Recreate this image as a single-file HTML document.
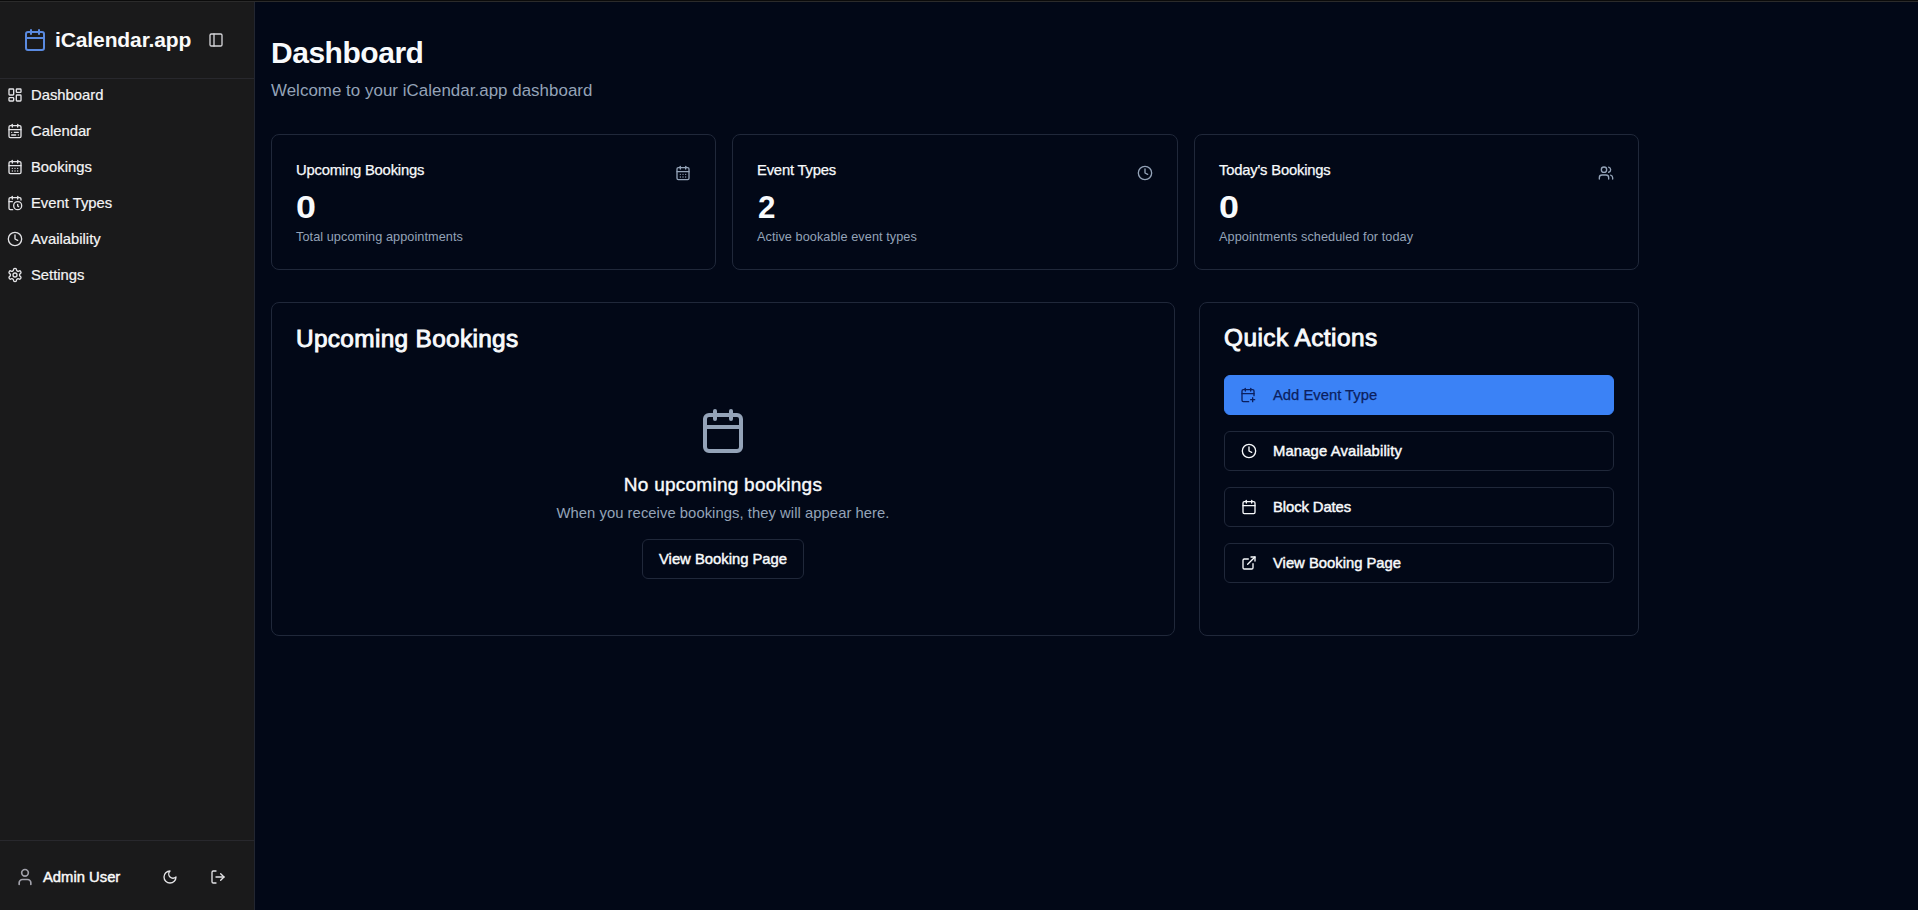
<!DOCTYPE html>
<html><head><meta charset="utf-8">
<style>
*{box-sizing:border-box;margin:0;padding:0}
html,body{width:1918px;height:910px;overflow:hidden;background:#020817;font-family:"Liberation Sans",sans-serif;color:#f8fafc}
svg.i{position:absolute;fill:none;stroke:currentColor;stroke-width:2;stroke-linecap:round;stroke-linejoin:round}
#topline{position:absolute;left:0;top:0;width:1918px;height:2px;background:#0b0b0b;border-bottom:1px solid #2b2b2b;z-index:5}
#side{position:absolute;left:0;top:0;width:255px;height:910px;background:#1a1a1b;border-right:1px solid #222631}
.hdr{position:absolute;left:0;top:0;width:254px;height:79px;border-bottom:1px solid #28282d}
.ftr{position:absolute;left:0;top:840px;width:254px;height:70px;border-top:1px solid #28282d}
.t{position:absolute;white-space:nowrap;line-height:1}
.card{position:absolute;border:1px solid #20283a;border-radius:8px;background:#020817}
.btn{position:absolute;border:1px solid #20283a;border-radius:6px;background:#020817}
</style></head><body>
<div id="topline"></div>
<div id="side">
<div class="hdr"></div>
<svg class="i" style="left:23px;top:28px;color:#5a8ae0" width="24" height="24" viewBox="0 0 24 24"><path d="M8 2v4"/><path d="M16 2v4"/><rect width="18" height="18" x="3" y="4" rx="2"/><path d="M3 10h18"/></svg>
<div class="t" style="left:55px;top:29.42px;font-size:21px;color:#fafafa;font-weight:bold;letter-spacing:-0.11px;">iCalendar.app</div>
<svg class="i" style="left:208px;top:32px;color:#d4d4d8" width="16" height="16" viewBox="0 0 24 24"><rect width="18" height="18" x="3" y="3" rx="2"/><path d="M9 3v18"/></svg>
<svg class="i" style="left:7px;top:87px;color:#e4e4e7" width="16" height="16" viewBox="0 0 24 24"><rect width="7" height="9" x="3" y="3" rx="1"/><rect width="7" height="5" x="14" y="3" rx="1"/><rect width="7" height="9" x="14" y="12" rx="1"/><rect width="7" height="5" x="3" y="16" rx="1"/></svg>
<div class="t" style="left:31px;top:88.17px;font-size:14.8px;color:#f4f4f5;-webkit-text-stroke:0.2px currentColor;">Dashboard</div>
<svg class="i" style="left:7px;top:123px;color:#e4e4e7" width="16" height="16" viewBox="0 0 24 24"><rect width="18" height="18" x="3" y="4" rx="2"/><path d="M16 2v4"/><path d="M3 10h18"/><path d="M8 2v4"/><path d="M17 14h-6"/><path d="M13 18H7"/><path d="M7 14h.01"/><path d="M17 18h.01"/></svg>
<div class="t" style="left:31px;top:124.17px;font-size:14.8px;color:#f4f4f5;-webkit-text-stroke:0.2px currentColor;">Calendar</div>
<svg class="i" style="left:7px;top:159px;color:#e4e4e7" width="16" height="16" viewBox="0 0 24 24"><path d="M8 2v4"/><path d="M16 2v4"/><rect width="18" height="18" x="3" y="4" rx="2"/><path d="M3 10h18"/><path d="M8 14h.01"/><path d="M12 14h.01"/><path d="M16 14h.01"/><path d="M8 18h.01"/><path d="M12 18h.01"/><path d="M16 18h.01"/></svg>
<div class="t" style="left:31px;top:160.17px;font-size:14.8px;color:#f4f4f5;-webkit-text-stroke:0.2px currentColor;">Bookings</div>
<svg class="i" style="left:7px;top:195px;color:#e4e4e7" width="16" height="16" viewBox="0 0 24 24"><path d="M21 7.5V6a2 2 0 0 0-2-2H5a2 2 0 0 0-2 2v14a2 2 0 0 0 2 2h3.5"/><path d="M16 2v4"/><path d="M8 2v4"/><path d="M3 10h5"/><path d="M17.5 17.5 16 16.3V14"/><circle cx="16" cy="16" r="6"/></svg>
<div class="t" style="left:31px;top:196.17px;font-size:14.8px;color:#f4f4f5;-webkit-text-stroke:0.2px currentColor;">Event Types</div>
<svg class="i" style="left:7px;top:231px;color:#e4e4e7" width="16" height="16" viewBox="0 0 24 24"><circle cx="12" cy="12" r="10"/><polyline points="12 6 12 12 16 14"/></svg>
<div class="t" style="left:31px;top:232.17px;font-size:14.8px;color:#f4f4f5;-webkit-text-stroke:0.2px currentColor;">Availability</div>
<svg class="i" style="left:7px;top:267px;color:#e4e4e7" width="16" height="16" viewBox="0 0 24 24"><path d="M12.22 2h-.44a2 2 0 0 0-2 2v.18a2 2 0 0 1-1 1.73l-.43.25a2 2 0 0 1-2 0l-.15-.08a2 2 0 0 0-2.73.73l-.22.38a2 2 0 0 0 .73 2.73l.15.1a2 2 0 0 1 1 1.72v.51a2 2 0 0 1-1 1.74l-.15.09a2 2 0 0 0-.73 2.73l.22.38a2 2 0 0 0 2.73.73l.15-.08a2 2 0 0 1 2 0l.43.25a2 2 0 0 1 1 1.73V20a2 2 0 0 0 2 2h.44a2 2 0 0 0 2-2v-.18a2 2 0 0 1 1-1.73l.43-.25a2 2 0 0 1 2 0l.15.08a2 2 0 0 0 2.73-.73l.22-.39a2 2 0 0 0-.73-2.73l-.15-.08a2 2 0 0 1-1-1.74v-.5a2 2 0 0 1 1-1.74l.15-.09a2 2 0 0 0 .73-2.73l-.22-.38a2 2 0 0 0-2.73-.73l-.15.08a2 2 0 0 1-2 0l-.43-.25a2 2 0 0 1-1-1.73V4a2 2 0 0 0-2-2z"/><circle cx="12" cy="12" r="3"/></svg>
<div class="t" style="left:31px;top:268.17px;font-size:14.8px;color:#f4f4f5;-webkit-text-stroke:0.2px currentColor;">Settings</div>
<div class="ftr"></div>
<svg class="i" style="left:15px;top:867px;color:#a1a1aa" width="20" height="20" viewBox="0 0 24 24"><path d="M19 21v-2a4 4 0 0 0-4-4H9a4 4 0 0 0-4 4v2"/><circle cx="12" cy="7" r="4"/></svg>
<div class="t" style="left:43px;top:870.27px;font-size:14.8px;color:#fafafa;-webkit-text-stroke:0.45px currentColor;">Admin User</div>
<svg class="i" style="left:162px;top:869px;color:#e4e4e7" width="16" height="16" viewBox="0 0 24 24"><path d="M12 3a6 6 0 0 0 9 9 9 9 0 1 1-9-9Z"/></svg>
<svg class="i" style="left:210px;top:869px;color:#e4e4e7" width="16" height="16" viewBox="0 0 24 24"><path d="M9 21H5a2 2 0 0 1-2-2V5a2 2 0 0 1 2-2h4"/><polyline points="16 17 21 12 16 7"/><line x1="21" x2="9" y1="12" y2="12"/></svg>
</div>
<div class="t" style="left:271px;top:37.70px;font-size:30px;color:#f8fafc;font-weight:bold;letter-spacing:-0.47px;">Dashboard</div>
<div class="t" style="left:271px;top:82.79px;font-size:16.9px;color:#94a3b8;letter-spacing:0.04px;">Welcome to your iCalendar.app dashboard</div>
<div class="card" style="left:271px;top:134px;width:445px;height:136px"></div>
<div class="card" style="left:732px;top:134px;width:446px;height:136px"></div>
<div class="card" style="left:1194px;top:134px;width:445px;height:136px"></div>
<div class="t" style="left:296px;top:162.97px;font-size:14.8px;color:#f8fafc;-webkit-text-stroke:0.25px currentColor;letter-spacing:-0.2px;">Upcoming Bookings</div>
<div class="t" style="left:296px;top:190.81px;font-size:32px;color:#f8fafc;font-weight:bold;transform:scaleX(1.12);transform-origin:0 0;">0</div>
<div class="t" style="left:296px;top:230.75px;font-size:12.7px;color:#94a3b8;letter-spacing:0.07px;">Total upcoming appointments</div>
<svg class="i" style="left:675px;top:165px;color:#94a3b8" width="16" height="16" viewBox="0 0 24 24"><path d="M8 2v4"/><path d="M16 2v4"/><rect width="18" height="18" x="3" y="4" rx="2"/><path d="M3 10h18"/><path d="M8 14h.01"/><path d="M12 14h.01"/><path d="M16 14h.01"/><path d="M8 18h.01"/><path d="M12 18h.01"/><path d="M16 18h.01"/></svg>
<div class="t" style="left:757px;top:162.97px;font-size:14.8px;color:#f8fafc;-webkit-text-stroke:0.25px currentColor;letter-spacing:-0.2px;">Event Types</div>
<div class="t" style="left:757.6px;top:190.81px;font-size:32px;color:#f8fafc;font-weight:bold;transform:scaleX(0.98);transform-origin:0 0;">2</div>
<div class="t" style="left:757px;top:230.75px;font-size:12.7px;color:#94a3b8;letter-spacing:0.07px;">Active bookable event types</div>
<svg class="i" style="left:1137px;top:165px;color:#94a3b8" width="16" height="16" viewBox="0 0 24 24"><circle cx="12" cy="12" r="10"/><polyline points="12 6 12 12 16 14"/></svg>
<div class="t" style="left:1219px;top:162.97px;font-size:14.8px;color:#f8fafc;-webkit-text-stroke:0.25px currentColor;letter-spacing:-0.2px;">Today's Bookings</div>
<div class="t" style="left:1219px;top:190.81px;font-size:32px;color:#f8fafc;font-weight:bold;transform:scaleX(1.12);transform-origin:0 0;">0</div>
<div class="t" style="left:1219px;top:230.75px;font-size:12.7px;color:#94a3b8;letter-spacing:0.07px;">Appointments scheduled for today</div>
<svg class="i" style="left:1598px;top:165px;color:#94a3b8" width="16" height="16" viewBox="0 0 24 24"><path d="M16 21v-2a4 4 0 0 0-4-4H6a4 4 0 0 0-4 4v2"/><circle cx="9" cy="7" r="4"/><path d="M22 21v-2a4 4 0 0 0-3-3.87"/><path d="M16 3.13a4 4 0 0 1 0 7.75"/></svg>
<div class="card" style="left:271px;top:302px;width:904px;height:334px"></div>
<div class="card" style="left:1199px;top:302px;width:440px;height:334px"></div>
<div class="t" style="left:296px;top:326.55px;font-size:24.4px;color:#f8fafc;-webkit-text-stroke:0.9px currentColor;letter-spacing:0.33px;">Upcoming Bookings</div>
<div class="t" style="left:1224px;top:326.05px;font-size:24.4px;color:#f8fafc;-webkit-text-stroke:0.9px currentColor;letter-spacing:0.45px;">Quick Actions</div>
<svg class="i" style="left:699px;top:407px;color:#94a3b8" width="48" height="48" viewBox="0 0 24 24"><path d="M8 2v4"/><path d="M16 2v4"/><rect width="18" height="18" x="3" y="4" rx="2"/><path d="M3 10h18"/></svg>
<div class="t" style="left:271px;width:904px;text-align:center;top:475.12px;font-size:19px;color:#f8fafc;-webkit-text-stroke:0.4px currentColor;letter-spacing:0.25px;">No upcoming bookings</div>
<div class="t" style="left:271px;width:904px;text-align:center;top:506.47px;font-size:14.8px;color:#94a3b8;letter-spacing:0.05px;">When you receive bookings, they will appear here.</div>
<div class="btn" style="left:642px;top:539px;width:162px;height:40px"></div>
<div class="t" style="left:659px;top:552.27px;font-size:14.8px;color:#f8fafc;-webkit-text-stroke:0.45px currentColor;">View Booking Page</div>
<div class="btn" style="left:1224px;top:375px;width:390px;height:40px;background:#3b82f6;border-color:#3b82f6"></div>
<svg class="i" style="left:1240px;top:387px;color:#0b1f5e" width="16" height="16" viewBox="0 0 24 24"><path d="M8 2v4"/><path d="M16 2v4"/><path d="M21 13V6a2 2 0 0 0-2-2H5a2 2 0 0 0-2 2v14a2 2 0 0 0 2 2h8"/><path d="M3 10h18"/><path d="M16 19h6"/><path d="M19 16v6"/></svg>
<div class="t" style="left:1273px;top:388.27px;font-size:14.8px;color:#0b1f5e;-webkit-text-stroke:0.25px currentColor;letter-spacing:0px;">Add Event Type</div>
<div class="btn" style="left:1224px;top:431px;width:390px;height:40px"></div>
<svg class="i" style="left:1241px;top:443px;color:#f8fafc" width="16" height="16" viewBox="0 0 24 24"><circle cx="12" cy="12" r="10"/><polyline points="12 6 12 12 16 14"/></svg>
<div class="t" style="left:1273px;top:444.27px;font-size:14.8px;color:#f8fafc;-webkit-text-stroke:0.45px currentColor;letter-spacing:0.14px;">Manage Availability</div>
<div class="btn" style="left:1224px;top:487px;width:390px;height:40px"></div>
<svg class="i" style="left:1241px;top:499px;color:#f8fafc" width="16" height="16" viewBox="0 0 24 24"><path d="M8 2v4"/><path d="M16 2v4"/><rect width="18" height="18" x="3" y="4" rx="2"/><path d="M3 10h18"/></svg>
<div class="t" style="left:1273px;top:500.27px;font-size:14.8px;color:#f8fafc;-webkit-text-stroke:0.45px currentColor;letter-spacing:-0.08px;">Block Dates</div>
<div class="btn" style="left:1224px;top:543px;width:390px;height:40px"></div>
<svg class="i" style="left:1241px;top:555px;color:#f8fafc" width="16" height="16" viewBox="0 0 24 24"><path d="M15 3h6v6"/><path d="M10 14 21 3"/><path d="M18 13v6a2 2 0 0 1-2 2H5a2 2 0 0 1-2-2V8a2 2 0 0 1 2-2h6"/></svg>
<div class="t" style="left:1273px;top:556.27px;font-size:14.8px;color:#f8fafc;-webkit-text-stroke:0.45px currentColor;letter-spacing:0px;">View Booking Page</div>
</body></html>
